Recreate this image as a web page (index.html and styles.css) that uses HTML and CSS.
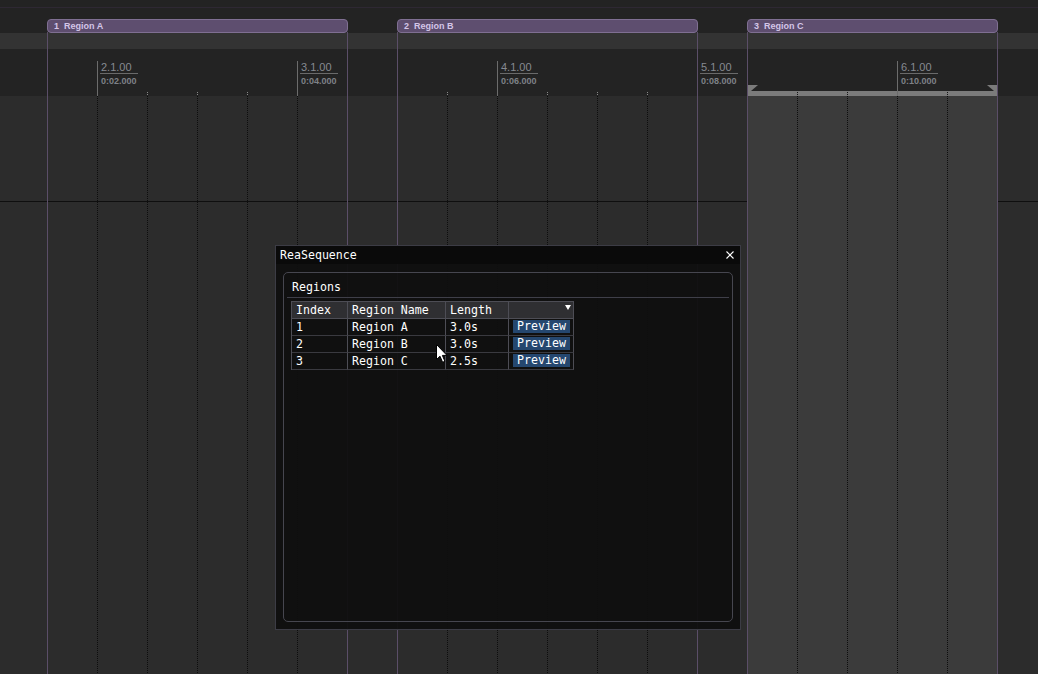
FILE: index.html
```html
<!DOCTYPE html>
<html>
<head>
<meta charset="utf-8">
<title>ReaSequence</title>
<link rel="stylesheet" href="styles.css">
</head>
<body>
<div class="arrange">
  <div class="topbar"></div>
  <div class="band"></div>
  <div class="ruler"></div>
  <div class="lane lane-first"></div>
  <div class="lane lane-rest"></div>

  <div class="selection"></div>
  <div class="grid-dots"></div>
  <div class="ruler-ticks"></div>

  <div class="sel-bar">
    <svg class="sel-flag sel-flag-l" width="10" height="6" viewBox="0 0 10 6"><polygon points="0,0 10,0 3,6 0,6" fill="#7b7b7b"/></svg>
    <svg class="sel-flag sel-flag-r" width="10" height="6" viewBox="0 0 10 6"><polygon points="0,0 10,0 10,6 7,6" fill="#7b7b7b"/></svg>
  </div>

  <div class="mark" style="left:97px"></div>
  <div class="mark" style="left:297px"></div>
  <div class="mark" style="left:497px"></div>
  <div class="mark" style="left:897px"></div>

  <div class="mlabel" style="left:100px"><div class="mbars">2.1.00</div><div class="mtime">0:02.000</div></div>
  <div class="mlabel" style="left:300px"><div class="mbars">3.1.00</div><div class="mtime">0:04.000</div></div>
  <div class="mlabel" style="left:500px"><div class="mbars">4.1.00</div><div class="mtime">0:06.000</div></div>
  <div class="mlabel" style="left:700px"><div class="mbars">5.1.00</div><div class="mtime">0:08.000</div></div>
  <div class="mlabel" style="left:900px"><div class="mbars">6.1.00</div><div class="mtime">0:10.000</div></div>

  <div class="rline" style="left:47px"></div>
  <div class="rline" style="left:347px"></div>
  <div class="rline" style="left:397px"></div>
  <div class="rline" style="left:697px"></div>
  <div class="rline" style="left:747px"></div>
  <div class="rline" style="left:997px"></div>

  <div class="region" style="left:47px;width:301px"><span class="rnum">1</span><span>Region A</span></div>
  <div class="region" style="left:397px;width:301px"><span class="rnum">2</span><span>Region B</span></div>
  <div class="region" style="left:747px;width:251px"><span class="rnum">3</span><span>Region C</span></div>

  <div class="window">
    <div class="titlebar">
      <span class="title">ReaSequence</span>
      <svg class="close" width="8" height="8" viewBox="0 0 8 8"><path d="M0.5 0.5 L7.5 7.5 M7.5 0.5 L0.5 7.5" stroke="#fff" stroke-width="1.1" fill="none"/></svg>
    </div>
    <div class="wbody">
      <div class="child">
        <div class="heading">Regions</div>
        <div class="sep"></div>
        <div class="tbl">
          <div class="cell head">Index</div>
          <div class="cell head">Region Name</div>
          <div class="cell head">Length</div>
          <div class="cell head head-sort"><svg width="6" height="5" viewBox="0 0 6 5"><polygon points="0,0 6,0 3,5" fill="#fff"/></svg></div>

          <div class="cell">1</div>
          <div class="cell">Region A</div>
          <div class="cell">3.0s</div>
          <div class="cell btn-cell"><button class="btn">Preview</button></div>

          <div class="cell">2</div>
          <div class="cell">Region B</div>
          <div class="cell">3.0s</div>
          <div class="cell btn-cell"><button class="btn">Preview</button></div>

          <div class="cell">3</div>
          <div class="cell">Region C</div>
          <div class="cell">2.5s</div>
          <div class="cell btn-cell"><button class="btn">Preview</button></div>
        </div>
      </div>
    </div>
  </div>

  <svg class="cursor" width="13" height="20" viewBox="0 0 13 20"><path d="M0.5 0.5 L0.5 15.5 L4 12.2 L6.6 18.3 L8.9 17.3 L6.4 11.4 L11 11.4 Z" fill="#fff" stroke="#000" stroke-width="1" stroke-linejoin="miter"/></svg>
</div>
</body>
</html>
```

FILE: styles.css
```css
* { box-sizing: border-box; }

body {
  margin: 0;
  background: #2c2c2c;
  overflow: hidden;
}

.arrange {
  position: relative;
  width: 1038px;
  height: 674px;
  display: flex;
  flex-direction: column;
  font-family: "Liberation Sans", Arial, sans-serif;
  overflow: hidden;
}

.topbar {
  height: 33px;
  background: #232323;
}
.topbar::before {
  content: "";
  display: block;
  height: 1px;
  margin-top: 7px;
  background: #2e2833;
}

.band {
  height: 16px;
  background: #333333;
}

.ruler {
  height: 47px;
  background: #232323;
}

.lane {
  background: #2c2c2c;
}
.lane-first {
  height: 106px;
  border-bottom: 1px solid #0f0f0f;
}
.lane-rest {
  flex: 1;
}

/* time selection over region C */
.selection {
  position: absolute;
  left: 748px;
  top: 96px;
  width: 249px;
  bottom: 0;
  background: #3b3b3b;
}

/* dotted beat grid */
.grid-dots {
  position: absolute;
  left: 0;
  right: 0;
  top: 96px;
  bottom: 0;
  background: repeating-linear-gradient(90deg, transparent 0 47px, #0d0d0d 47px 48px, transparent 48px 50px);
  -webkit-mask-image: repeating-linear-gradient(180deg, #000 0 1px, transparent 1px 2px);
  mask-image: repeating-linear-gradient(180deg, #000 0 1px, transparent 1px 2px);
}

.ruler-ticks {
  position: absolute;
  left: 0;
  right: 0;
  top: 92px;
  height: 4px;
  background: repeating-linear-gradient(90deg, transparent 0 47px, #8a8a8a 47px 48px, transparent 48px 50px);
  -webkit-mask-image: repeating-linear-gradient(180deg, #000 0 1px, transparent 1px 2px);
  mask-image: repeating-linear-gradient(180deg, #000 0 1px, transparent 1px 2px);
}

.sel-bar {
  position: absolute;
  left: 748px;
  top: 91px;
  width: 249px;
  height: 5px;
  background: #7b7b7b;
}
.sel-bar::after {
  content: "";
  position: absolute;
  left: 0;
  right: 0;
  top: 1px;
  bottom: 0;
  background: repeating-linear-gradient(90deg, transparent 0 49px, #151515 49px 50px);
  -webkit-mask-image: repeating-linear-gradient(180deg, #000 0 1px, transparent 1px 2px);
  mask-image: repeating-linear-gradient(180deg, #000 0 1px, transparent 1px 2px);
}
.sel-flag {
  position: absolute;
  top: -6px;
  display: block;
}
.sel-flag-l { left: 0; }
.sel-flag-r { right: 0; }

/* measure markers in ruler */
.mark {
  position: absolute;
  top: 61px;
  height: 35px;
  width: 1px;
  background: #6c6c6c;
}

.mlabel {
  position: absolute;
  top: 62px;
  width: 38px;
  color: #868a92;
}
.mbars {
  font-size: 11px;
  line-height: 11px;
  border-bottom: 1px solid #6a6a6a;
  padding-left: 1px;
}
.mtime {
  margin-top: 2px;
  font-size: 9px;
  font-weight: bold;
  line-height: 11px;
  color: #7e8187;
  padding-left: 1px;
}

/* region boundaries */
.rline {
  position: absolute;
  top: 32px;
  bottom: 0;
  width: 1px;
  background: #5b4e68;
}

.region {
  position: absolute;
  top: 19px;
  height: 14px;
  background: #5e4e6f;
  border: 1px solid #7f6f92;
  border-radius: 4px;
  display: flex;
  align-items: center;
  padding-left: 6px;
  font-size: 9px;
  font-weight: bold;
  line-height: 12px;
  color: #d4c6e8;
  white-space: nowrap;
}
.rnum {
  margin-right: 5px;
}

/* floating ImGui window */
.window {
  position: absolute;
  left: 275px;
  top: 245px;
  width: 466px;
  height: 385px;
  border: 1px solid #3c3c45;
  background: rgba(15, 15, 15, 0.94);
  display: flex;
  flex-direction: column;
  font-family: "DejaVu Sans Mono", "Liberation Mono", monospace;
  font-size: 11.6px;
  color: #ffffff;
}

.titlebar {
  height: 18px;
  background: #0a0a0a;
  display: flex;
  align-items: center;
  justify-content: space-between;
  padding: 0 6px 0 4px;
  line-height: 18px;
}
.close { display: block; }

.wbody {
  flex: 1;
  display: flex;
  flex-direction: column;
  padding: 8px 7px 7px 7px;
}

.child {
  flex: 1;
  border: 1px solid #46464f;
  border-radius: 5px;
  padding: 8px;
}

.heading {
  line-height: 13px;
}

.sep {
  height: 1px;
  background: #3f3f49;
  margin: 3px -5px 3px -5px;
}

.tbl {
  display: grid;
  grid-template-columns: 56px 98px 63px 65px;
  width: 283px;
  margin-left: -1px;
  border-left: 1px solid #4d4d55;
  border-top: 1px solid #4d4d55;
}

.cell {
  height: 17px;
  line-height: 16px;
  padding-left: 4px;
  border-right: 1px solid #4d4d55;
  border-bottom: 1px solid #3a3a40;
  white-space: nowrap;
}
.head {
  background: #2f2f32;
  border-bottom-color: #4d4d55;
}
.head-sort {
  display: flex;
  justify-content: flex-end;
  align-items: flex-start;
  padding: 3px 2px 0 0;
}
.head-sort svg { display: block; }

.btn-cell {
  padding: 1px 0 0 4px;
}
.btn {
  display: block;
  width: 57px;
  height: 13px;
  margin: 0;
  padding: 0;
  border: 0;
  background: #25476f;
  color: #ffffff;
  font-family: "DejaVu Sans Mono", "Liberation Mono", monospace;
  font-size: 11.6px;
  line-height: 13px;
  text-align: center;
}

.cursor {
  position: absolute;
  left: 436px;
  top: 344px;
  display: block;
}
```
